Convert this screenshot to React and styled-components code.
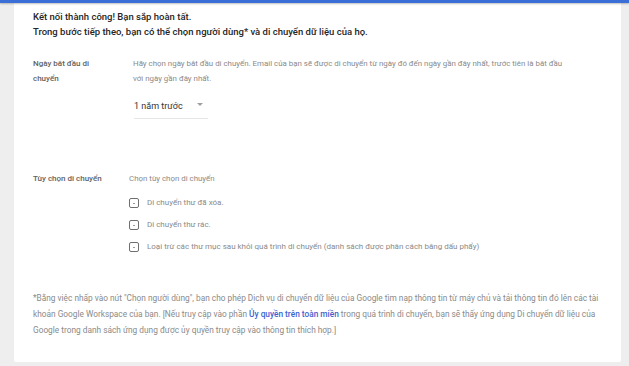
import React from "react";
import styled, { createGlobalStyle } from "styled-components";

const GlobalStyle = createGlobalStyle`
  html, body {
    margin: 0;
    padding: 0;
    background: #eeeeee;
    font-family: Roboto, "Liberation Sans", Arial, sans-serif;
  }
`;

const Page = styled.div`
  width: 629px;
  height: 366px;
  background: #eeeeee;
  display: flex;
  flex-direction: column;
  overflow: hidden;
`;

const TopBar = styled.div`
  height: 3px;
  background: #3b6fd8;
  box-shadow: 0 1px 2px rgba(0, 0, 0, 0.25);
  position: relative;
  z-index: 1;
`;

const Card = styled.div`
  margin: 0 8px 0 14px;
  height: 359px;
  background: #ffffff;
  border-radius: 0 0 2px 2px;
  padding: 6px 20px 0 19px;
  box-sizing: border-box;
  display: flex;
  flex-direction: column;
`;

const Heading = styled.div`
  font-size: 9.5px;
  line-height: 15px;
  font-weight: 500;
  color: #262626;
`;

const Row = styled.div`
  display: flex;
  margin-top: ${({ $top }) => $top}px;
`;

const Label = styled.div`
  width: ${({ $width }) => $width}px;
  flex: none;
  padding-right: 20px;
  box-sizing: border-box;
  font-size: 8px;
  line-height: 15px;
  font-weight: 500;
  color: #616161;
`;

const Content = styled.div`
  flex: 1;
  display: flex;
  flex-direction: column;
  align-items: flex-start;
`;

const Hint = styled.div`
  font-size: 7.9px;
  line-height: 15px;
  color: #8a8a8a;
`;

const Select = styled.div`
  margin-top: 10px;
  margin-left: 1px;
  width: 74px;
  height: 23px;
  box-sizing: border-box;
  border-bottom: 1px solid #e6e6e6;
  display: flex;
  align-items: center;
  justify-content: space-between;
  padding: 0 5px 2px 0;
  font-size: 9px;
  color: #333333;
`;

const Caret = styled.span`
  width: 0;
  height: 0;
  border-left: 3px solid transparent;
  border-right: 3px solid transparent;
  border-top: 3px solid #a0a0a0;
  margin-bottom: 3px;
`;

const Options = styled.div`
  margin-top: 11px;
  display: flex;
  flex-direction: column;
  gap: 10px;
`;

const Option = styled.div`
  display: flex;
  align-items: center;
  gap: 8px;
  font-size: 8px;
  line-height: 12px;
  color: #8a8a8a;
`;

const Box = styled.span`
  width: 10px;
  height: 10px;
  box-sizing: border-box;
  border: 1.5px solid #6f6f6f;
  border-radius: 2px;
  display: flex;
  align-items: center;
  justify-content: center;

  &::after {
    content: "";
    width: 2px;
    height: 1px;
    background: #9a9a9a;
  }
`;

const Footnote = styled.p`
  margin: auto 0 24px;
  font-size: 8.3px;
  line-height: 16px;
  color: #8a8a8a;
`;

const Link = styled.span`
  color: #3d5fcf;
  font-weight: 500;
`;

const options = [
  "Di chuyển thư đã xóa.",
  "Di chuyển thư rác.",
  "Loại trừ các thư mục sau khỏi quá trình di chuyển (danh sách được phân cách bằng dấu phẩy)",
];

export default function App() {
  return (
    <Page>
      <GlobalStyle />
      <TopBar />
      <Card>
        <Heading>
          Kết nối thành công! Bạn sắp hoàn tất.
          <br />
          Trong bước tiếp theo, bạn có thể chọn người dùng* và di chuyển dữ liệu của họ.
        </Heading>

        <Row $top={17}>
          <Label $width={100}>Ngày bắt đầu di chuyển</Label>
          <Content>
            <Hint>
              Hãy chọn ngày bắt đầu di chuyển. Email của bạn sẽ được di chuyển từ ngày đó đến ngày gần đây nhất, trước tiên là bắt đầu
              <br />
              với ngày gần đây nhất.
            </Hint>
            <Select>
              1 năm trước
              <Caret />
            </Select>
          </Content>
        </Row>

        <Row $top={52}>
          <Label $width={96}>Tùy chọn di chuyển</Label>
          <Content>
            <Hint>Chọn tùy chọn di chuyển</Hint>
            <Options>
              {options.map((text) => (
                <Option key={text}>
                  <Box />
                  {text}
                </Option>
              ))}
            </Options>
          </Content>
        </Row>

        <Footnote>
          *Bằng việc nhấp vào nút "Chọn người dùng", bạn cho phép Dịch vụ di chuyển dữ liệu của Google tìm nạp thông tin từ máy chủ và tải thông tin đó lên các tài
          <br />
          khoản Google Workspace của bạn. [Nếu truy cập vào phần <Link>Ủy quyền trên toàn miền</Link> trong quá trình di chuyển, bạn sẽ thấy ứng dụng Di chuyển dữ liệu của
          <br />
          Google trong danh sách ứng dụng được ủy quyền truy cập vào thông tin thích hợp.]
        </Footnote>
      </Card>
    </Page>
  );
}
